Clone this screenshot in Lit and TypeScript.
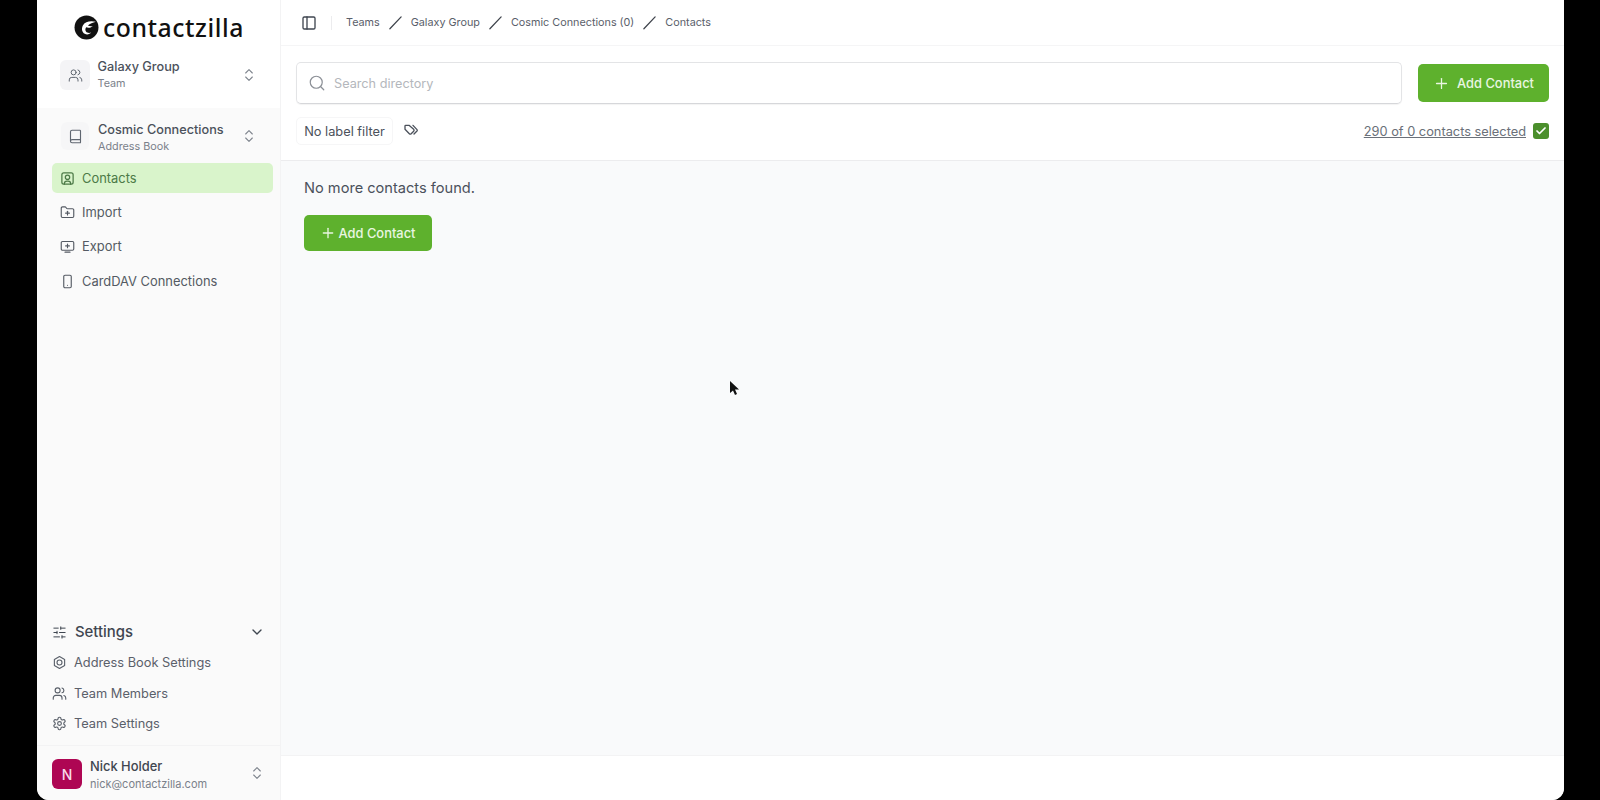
import { LitElement, html, css, svg } from "lit";
import { customElement } from "lit/decorators.js";

const ic = (body: unknown, size = 16, sw = 1.8) => html`<svg width=${size} height=${size} viewBox="0 0 24 24" fill="none" stroke="currentColor" stroke-width=${sw} stroke-linecap="round" stroke-linejoin="round">${body}</svg>`;
const users = svg`<path d="M16 21v-2a4 4 0 0 0-4-4H6a4 4 0 0 0-4 4v2"/><circle cx="9" cy="7" r="4"/><path d="M22 21v-2a4 4 0 0 0-3-3.87"/><path d="M16 3.13a4 4 0 0 1 0 7.75"/>`;
const updown = svg`<path d="m7 15 5 5 5-5"/><path d="m7 9 5-5 5 5"/>`;
const plus = svg`<path d="M5 12h14"/><path d="M12 5v14"/>`;
const slash = svg`<path d="M3 22 21 3"/>`;

@customElement("app-root")
export class AppRoot extends LitElement {
  static styles = css`
    :host { display: block; width: 1600px; height: 800px; background: #000; overflow: hidden; position: relative;
      font-family: "Inter", "Noto Sans", sans-serif; color: #3f4650; }
    .frame { margin-left: 37px; width: 1527px; height: 800px; background: #fff; border-radius: 0 0 12px 12px; overflow: hidden; display: flex; }
    .side { width: 244px; flex: none; background: #fafafa; border-right: 1px solid #f3f3f4; box-sizing: border-box; display: flex; flex-direction: column; }
    .side-top { background: #fff; height: 108px; box-sizing: border-box; padding-top: 12px; }
    .logo { display: flex; align-items: center; gap: 4px; padding-left: 37px; height: 30px; color: #111; font: 500 24.8px/30px "Noto Sans", sans-serif; letter-spacing: .55px; }
    .picker { display: flex; align-items: center; margin-top: 13px; padding: 0 0 0 23px; height: 40px; }
    .box { width: 30px; height: 30px; border-radius: 6px; background: #f4f4f6; display: flex; align-items: center; justify-content: center; color: #5f6670; flex: none; }
    .picker-text { margin-left: 7.5px; flex: 1; }
    .title { font-size: 12.7px; line-height: 17px; font-weight: 500; color: #4b515b; }
    .sub { font-size: 10.8px; line-height: 17px; color: #7b818a; }
    .updown { color: #7d838c; width: 16px; height: 16px; margin-right: 23px; }
    .second { margin-top: 8px; padding-left: 24px; }
    .second .box { background: #f6f6f7; width: 28px; height: 28px; }
    .second .picker-text { margin-left: 9px; padding-top: 3px; }
    .nav { margin-top: 7px; padding: 0 7px 0 15px; display: flex; flex-direction: column; gap: 4px; }
    .item { display: flex; align-items: center; gap: 7px; height: 30.3px; padding-left: 8px; font-size: 12.9px; color: #545a63; border-radius: 5px; }
    .item.active { background: #d9f4cb; color: #4c7a47; }
    .spacer { flex: 1; }
    .set-head { display: flex; align-items: center; height: 20px; margin-top: -1px; padding: 0 15px 0 15px; font-size: 14.9px; font-weight: 500; color: #3f4650; gap: 8px; }
    .set-head span { flex: 1; }
    .set-list { margin: 11px 0 12px; padding-left: 15px; display: flex; flex-direction: column; gap: 11.4px; }
    .set { display: flex; align-items: center; gap: 7px; height: 19px; font-size: 12.8px; color: #5a606a; }
    .user { border-top: 1px solid #f3f3f4; height: 55px; box-sizing: border-box; padding: 13px 15px 0 15px; display: flex; align-items: flex-start; }
    .avatar { width: 30px; height: 30px; border-radius: 6px; background: #ae0653; color: #f7dbe8; font-size: 14px; font-weight: 500; display: flex; align-items: center; justify-content: center; flex: none; }
    .user-text { margin-left: 8px; flex: 1; margin-top: -1px; }
    .user .updown { margin: 6px 0 0; }
    .name { font-size: 12.9px; line-height: 17px; font-weight: 500; color: #3f4650; }
    .mail { font-size: 11px; line-height: 18px; color: #7b818a; }
    .main { flex: 1; display: flex; flex-direction: column; min-width: 0; }
    .crumbs { height: 46px; box-sizing: border-box; border-bottom: 1px solid #f5f5f6; display: flex; align-items: center; padding-left: 20px; font-size: 10.8px; color: #5a606a; }
    .crumbs .toggle { color: #3f4650; display: flex; }
    .vsep { width: 1px; height: 14px; background: #ececee; margin: 0 14px 0 14px; }
    .slash { margin: 0 8px 0 8px; display: flex; color: #3f444c; }
    .toolbar { height: 115px; box-sizing: border-box; border-bottom: 1px solid #ececee; padding: 16px 15px 0 15px; }
    .row1 { display: flex; align-items: center; gap: 16px; }
    .search { flex: 1; height: 42px; box-sizing: border-box; border: 1px solid #e3e4e6; border-bottom-color: #d6d7da; border-radius: 5px; display: flex; align-items: center; padding-left: 11px; gap: 8px; color: #b4b7bc; font-size: 12.7px; box-shadow: 0 1px 1px rgba(0,0,0,.05); }
    .search svg { color: #8b8f96; }
    .btn { background: #5eb12d; color: #e9f6e1; border-radius: 5px; display: flex; align-items: center; justify-content: center; font-size: 12.9px; font-weight: 500; }
    .btn-top { width: 131px; height: 38px; gap: 7px; }
    .row2 { display: flex; align-items: center; margin-top: 13px; height: 28px; }
    .filter { border: 1px solid #f6f6f7; border-radius: 5px; height: 28px; box-sizing: border-box; width: 97px; display: flex; align-items: center; justify-content: center; font-size: 12.8px; color: #4b515b; }
    .tag { margin-left: 10px; color: #4b515b; display: flex; margin-top: -3px; }
    .sel { margin-left: auto; font-size: 12.8px; color: #6a7079; text-decoration: underline; }
    .check { margin-left: 7px; width: 16px; height: 16px; border-radius: 3px; background: #4b8f2c; color: #fff; display: flex; align-items: center; justify-content: center; }
    .content { flex: 1; background: #f9fafb; padding: 17px 23px; border-bottom: 1px solid #f3f3f4; }
    .empty { font-size: 14.6px; line-height: 20px; color: #4b515b; }
    .btn-low { margin-top: 17px; width: 128px; height: 36px; gap: 2px; }
    .foot { height: 44px; background: #fff; }
    .cursor { position: absolute; left: 729px; top: 380px; display: flex; }
  `;
  render() {
    return html`<div class="frame">
      <aside class="side">
        <div class="side-top">
          <div class="logo">
            <svg width="25" height="25" viewBox="0 0 24 24"><circle cx="12" cy="12" r="11.5" fill="#111"/><path d="M21 6.500c-5-1.300-10.500-.3-12.500 3.500-1.600 3-.9 6.500 1.800 8 2.300 1.200 4.800 .5 6.200-1.200-2 .7-4 .4-5-1-.9-1.200-.7-2.800 .2-4 1.900 .9 4.200 .5 6.500-1.300-1.500 .3-3 .3-4.900-.3 2-1.900 4.700-3 7.700-3.700z" fill="#fff"/></svg>
            <span>contactzilla</span>
          </div>
          <div class="picker">
            <div class="box">${ic(users, 15, 1.6)}</div>
            <div class="picker-text"><div class="title">Galaxy Group</div><div class="sub">Team</div></div>
            <div class="updown">${ic(updown, 16, 1.6)}</div>
          </div>
        </div>
        <div class="picker second">
          <div class="box">${ic(svg`<path d="M4 19.500v-15A2.500 2.500 0 0 1 6.500 2H19a1 1 0 0 1 1 1v18a1 1 0 0 1-1 1H6.500a1 1 0 0 1 0-5H20"/>`, 15, 1.8)}</div>
          <div class="picker-text"><div class="title">Cosmic Connections</div><div class="sub">Address Book</div></div>
          <div class="updown">${ic(updown, 16, 1.6)}</div>
        </div>
        <nav class="nav">
          <div class="item active">${ic(svg`<rect x="3" y="3" width="18" height="18" rx="3"/><circle cx="12" cy="10" r="3.500"/><path d="M7 21v-1a4 4 0 0 1 4-4h2a4 4 0 0 1 4 4v1"/>`, 15, 2)}Contacts</div>
          <div class="item">${ic(svg`<path d="M20 20a2 2 0 0 0 2-2V8a2 2 0 0 0-2-2h-7.900a2 2 0 0 1-1.700-.9l-.8-1.200A2 2 0 0 0 7.900 3H4a2 2 0 0 0-2 2v13a2 2 0 0 0 2 2Z"/><path d="M12 10v6"/><path d="M9 13h6"/>`, 15)}Import</div>
          <div class="item">${ic(svg`<rect x="2" y="4" width="20" height="14" rx="2"/><path d="M8 21h8"/><path d="M12 8v6"/><path d="M9 11h6"/>`, 15)}Export</div>
          <div class="item">${ic(svg`<rect x="6" y="2" width="12" height="20" rx="2"/><path d="M12 18h.01"/>`, 15)}CardDAV Connections</div>
        </nav>
        <div class="spacer"></div>
        <div class="set-head">${ic(svg`<path d="M21 5h-7"/><path d="M10 5H3"/><path d="M21 12h-9"/><path d="M8 12H3"/><path d="M21 19h-5"/><path d="M12 19H3"/><path d="M14 3v4"/><path d="M8 10v4"/><path d="M16 17v4"/>`, 15, 1.6)}<span>Settings</span>${ic(svg`<path d="m6 9 6 6 6-6"/>`, 16, 2)}</div>
        <div class="set-list">
          <div class="set">${ic(svg`<path d="M12 2.500l8.200 4.750v9.500L12 21.500l-8.200-4.750v-9.500z"/><circle cx="12" cy="12" r="4"/>`, 15)}Address Book Settings</div>
          <div class="set">${ic(users, 15)}Team Members</div>
          <div class="set">${ic(svg`<path d="M12.220 2h-.44a2 2 0 0 0-2 2v.18a2 2 0 0 1-1 1.730l-.43.250a2 2 0 0 1-2 0l-.15-.08a2 2 0 0 0-2.730.730l-.22.380a2 2 0 0 0 .73 2.730l.15.100a2 2 0 0 1 1 1.720v.510a2 2 0 0 1-1 1.740l-.15.090a2 2 0 0 0-.73 2.730l.22.380a2 2 0 0 0 2.730.730l.15-.08a2 2 0 0 1 2 0l.43.250a2 2 0 0 1 1 1.730V20a2 2 0 0 0 2 2h.44a2 2 0 0 0 2-2v-.18a2 2 0 0 1 1-1.730l.43-.250a2 2 0 0 1 2 0l.15.080a2 2 0 0 0 2.730-.730l.22-.390a2 2 0 0 0-.73-2.730l-.15-.080a2 2 0 0 1-1-1.740v-.500a2 2 0 0 1 1-1.740l.15-.090a2 2 0 0 0 .73-2.730l-.22-.380a2 2 0 0 0-2.730-.730l-.15.080a2 2 0 0 1-2 0l-.43-.250a2 2 0 0 1-1-1.730V4a2 2 0 0 0-2-2z"/><circle cx="12" cy="12" r="3"/>`, 15)}Team Settings</div>
        </div>
        <div class="user">
          <div class="avatar">N</div>
          <div class="user-text"><div class="name">Nick Holder</div><div class="mail">nick@contactzilla.com</div></div>
          <div class="updown">${ic(updown, 16, 1.6)}</div>
        </div>
      </aside>
      <main class="main">
        <div class="crumbs">
          <span class="toggle">${ic(svg`<rect x="3" y="3" width="18" height="18" rx="2"/><path d="M9 3v18"/>`, 16, 2)}</span>
          <span class="vsep"></span>
          Teams<span class="slash">${ic(slash, 15, 2)}</span>Galaxy Group<span class="slash">${ic(slash, 15, 2)}</span>Cosmic Connections (0)<span class="slash">${ic(slash, 15, 2)}</span>Contacts
        </div>
        <div class="toolbar">
          <div class="row1">
            <div class="search">${ic(svg`<circle cx="11" cy="11" r="8"/><path d="m21 21-4.300-4.300"/>`, 18, 1.6)}Search directory</div>
            <div class="btn btn-top">${ic(plus, 17, 1.8)}Add Contact</div>
          </div>
          <div class="row2">
            <div class="filter">No label filter</div>
            <span class="tag">${ic(svg`<path d="M9 5H4a1 1 0 0 0-1 1v5l6.500 6.500a2 2 0 0 0 2.800 0l3.700-3.700a2 2 0 0 0 0-2.800z"/><path d="m15 5 6 6.500a1.500 1.500 0 0 1 0 2L16.500 18"/>`, 16, 2)}</span>
            <span class="sel">290 of 0 contacts selected</span>
            <span class="check">${ic(svg`<path d="M20 6 9 17l-5-5"/>`, 12, 3.5)}</span>
          </div>
        </div>
        <div class="content">
          <div class="empty">No more contacts found.</div>
          <div class="btn btn-low">${ic(plus, 16, 2)}Add Contact</div>
        </div>
        <div class="foot"></div>
      </main>
    </div>
    <svg class="cursor" width="11" height="17" viewBox="0 0 11 17"><path d="M1 1v12l3-2.500 2 4.500 2-1-2-4.500h4z" fill="#111"/></svg>`;
  }
}
